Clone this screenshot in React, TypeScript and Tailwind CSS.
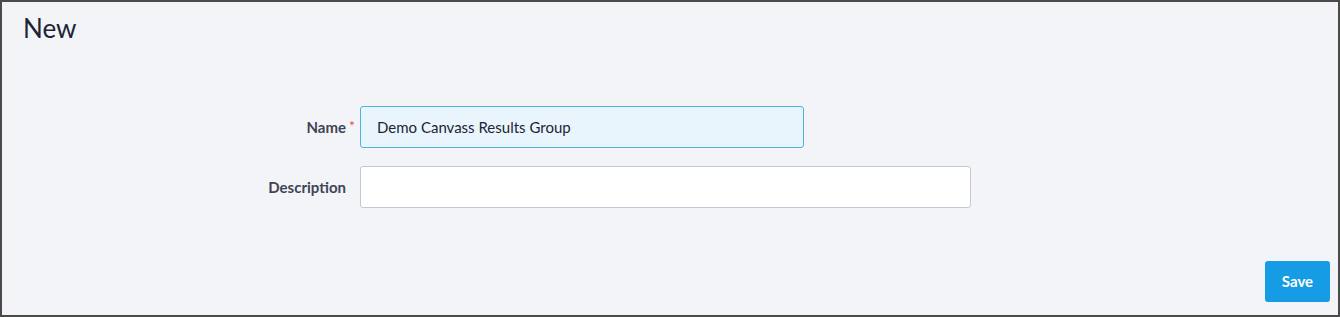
import React from 'react'

export default function App() {
    return (
        <div className="w-[1340px] h-[317px] border-2 border-[#4a4a4a] bg-[#f3f4f8] flex flex-col font-['Lato',sans-serif]">
            {/* Título */}
            <div className="px-[21px] pt-[9px]">
                <div className="text-[#1d2433] text-[26px] leading-[34px]">New</div>
            </div>

            {/* Formulario */}
            <div className="mt-[61px] flex flex-col gap-[18px]">
                <div className="flex items-center">
                    <div className="w-[344px] text-right text-[15px] font-bold text-[#3f4554] relative">
                        Name
                        <span className="absolute -right-[9px] top-[-1px] text-[#e5484d] font-normal text-[14px]">*</span>
                    </div>
                    <div className="ml-[14px] w-[444px] h-[42px] rounded-[3px] border border-[#4cb4dd] bg-[#e9f5fd] flex items-center px-[16px] text-[15px] text-[#1d2433]">
                        Demo Canvass Results Group
                    </div>
                </div>
                <div className="flex items-center">
                    <div className="w-[344px] text-right text-[15px] font-bold text-[#3f4554]">Description</div>
                    <div className="ml-[14px] w-[611px] h-[42px] rounded-[3px] border border-[#c3c8d6] bg-white" />
                </div>
            </div>

            <div className="flex-1" />

            {/* Botón */}
            <div className="flex justify-end pr-[8px] pb-[13px]">
                <button className="w-[65px] h-[41px] rounded-[3px] bg-[#169be5] text-white text-[15px] font-bold">Save</button>
            </div>
        </div>
    )
}
